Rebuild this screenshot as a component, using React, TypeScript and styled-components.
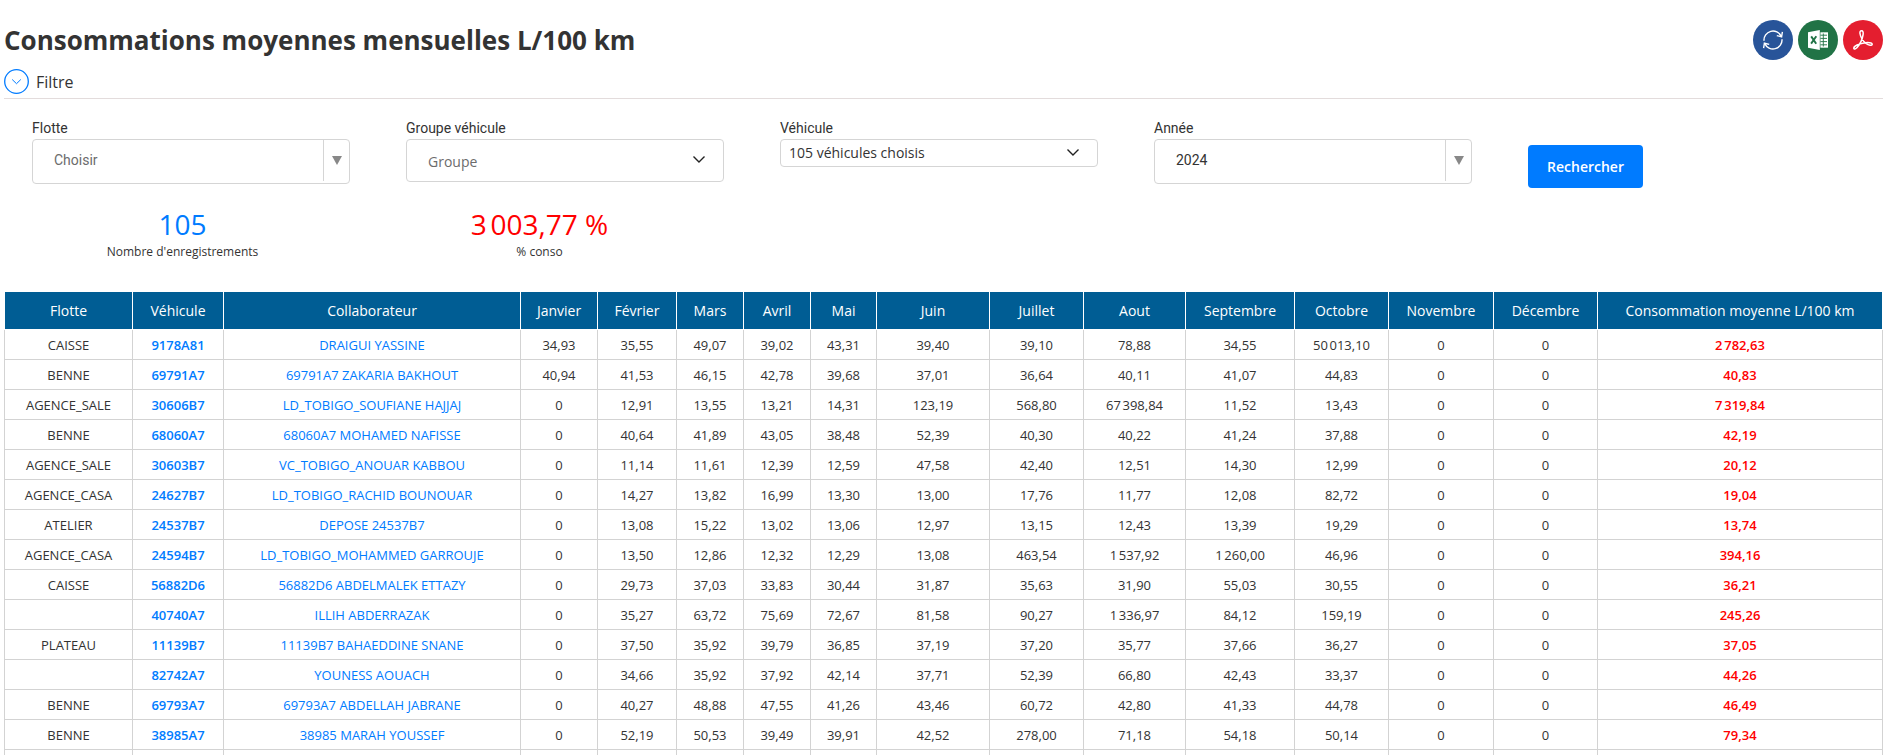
import React from "react";
import styled, { createGlobalStyle, css } from "styled-components";

const GlobalStyle = createGlobalStyle`
  *, *::before, *::after { box-sizing: border-box; }
  body {
    margin: 0;
    background: #fff;
    color: #333;
    font-family: "Open Sans", "Liberation Sans", sans-serif;
    font-size: 14px;
  }
`;

const Page = styled.main`
  height: 100vh;
  overflow: hidden auto;
  scrollbar-width: none;
  padding: 20px 6px 0 4px;
`;

const Header = styled.header`
  display: flex;
  align-items: center;
  justify-content: space-between;
  height: 40px;
`;

const Title = styled.h1`
  margin: 0;
  font-size: 26px;
  line-height: 40px;
  font-weight: 700;
`;

const Actions = styled.div`
  display: flex;
  gap: 5px;
`;

const ActionButton = styled.button<{ $color: string }>`
  display: flex;
  align-items: center;
  justify-content: center;
  width: 40px;
  height: 40px;
  padding: 0;
  border: 0;
  border-radius: 50%;
  background: ${(p) => p.$color};
  color: #fff;
  cursor: pointer;
`;

const FilterToggle = styled.button`
  display: flex;
  align-items: center;
  gap: 7px;
  width: 100%;
  height: 39px;
  padding: 5px 0 0;
  border: 0;
  border-bottom: 1px solid #e3dcdc;
  background: none;
  color: #333;
  font: 16px/24px "Open Sans", sans-serif;
  text-align: left;
  cursor: pointer;
`;

const Filters = styled.form`
  display: grid;
  grid-template-columns: repeat(5, 1fr);
  gap: 56px;
  align-items: start;
  height: 98px;
  padding: 19px 37px 0 28px;
`;

const Field = styled.div`
  display: flex;
  flex-direction: column;
`;

const Label = styled.label`
  color: #333;
  font: 14px/20px Roboto, sans-serif;
  height: 21px;
`;

const SelectBox = styled.div<{ $height: number }>`
  position: relative;
  display: flex;
  height: ${(p) => p.$height}px;
  border: 1px solid #d5d5d5;
  border-radius: 4px;
`;

const selectPadding = {
  split: "0 40px 4px 21px",
  plain: "2px 40px 0 21px",
  compact: "0 40px 0 8px",
};

const Select = styled.select<{ $kind: keyof typeof selectPadding; $muted?: boolean }>`
  appearance: none;
  flex: 1;
  min-width: 0;
  padding: ${(p) => selectPadding[p.$kind]};
  border: 0;
  background: transparent;
  color: ${(p) => (p.$muted ? "#6c6c6c" : "#333")};
  font: 14px/20px ${(p) => (p.$kind === "split" ? "Roboto" : '"Open Sans"')}, sans-serif;
`;

const ArrowCell = styled.span`
  position: absolute;
  top: 0;
  right: 0;
  bottom: 2px;
  display: flex;
  align-items: center;
  justify-content: center;
  width: 26px;
  border-left: 1px solid #d5d5d5;
  pointer-events: none;
`;

const ChevronCell = styled.span`
  position: absolute;
  top: 0;
  right: 17px;
  bottom: 2px;
  display: flex;
  align-items: center;
  pointer-events: none;
`;

const SearchButton = styled.button`
  justify-self: start;
  width: 115px;
  height: 43px;
  margin-top: 27px;
  padding: 0;
  border: 0;
  border-radius: 4px;
  background: #007bff;
  color: #fff;
  font: 600 14px/20px "Open Sans", sans-serif;
  cursor: pointer;
`;

const Stats = styled.section`
  display: grid;
  grid-template-columns: repeat(5, 19%);
  height: 94px;
  padding-top: 8px;
  text-align: center;
`;

const StatValue = styled.div<{ $color: string }>`
  color: ${(p) => p.$color};
  font-size: 28px;
  line-height: 38px;
  font-weight: 400;
`;

const StatLabel = styled.div`
  font-size: 12px;
  line-height: 18px;
`;

const Table = styled.table`
  width: 100%;
  table-layout: fixed;
  border-collapse: collapse;
  text-align: center;
  font-size: 13px;
  line-height: 18px;
`;

const HeadCell = styled.th`
  height: 38px;
  padding: 0;
  border: 1px solid #fff;
  background: #005d94;
  color: #fff;
  font-size: 14px;
  font-weight: 500;
`;

const Cell = styled.td<{ $alert?: boolean }>`
  height: 30px;
  padding: 0;
  border: 1px solid #d3d3d3;
  ${(p) => p.$alert && css`
    color: #f00;
    font-weight: 600;
  `}
`;

const CellLink = styled.a<{ $strong?: boolean }>`
  color: #007bff;
  font-weight: ${(p) => (p.$strong ? 600 : 400)};
  text-decoration: none;
`;

const columns: [string, number][] = [
  ["Flotte", 128], ["Véhicule", 91], ["Collaborateur", 297], ["Janvier", 77],
  ["Février", 79], ["Mars", 67], ["Avril", 67], ["Mai", 66], ["Juin", 113],
  ["Juillet", 94], ["Aout", 102], ["Septembre", 109], ["Octobre", 94],
  ["Novembre", 105], ["Décembre", 104], ["Consommation moyenne L/100 km", 285],
];

const rows = `CAISSE|9178A81|DRAIGUI YASSINE|34,93|35,55|49,07|39,02|43,31|39,40|39,10|78,88|34,55|50 013,10|0|0|2 782,63
BENNE|69791A7|69791A7 ZAKARIA BAKHOUT|40,94|41,53|46,15|42,78|39,68|37,01|36,64|40,11|41,07|44,83|0|0|40,83
AGENCE_SALE|30606B7|LD_TOBIGO_SOUFIANE HAJJAJ|0|12,91|13,55|13,21|14,31|123,19|568,80|67 398,84|11,52|13,43|0|0|7 319,84
BENNE|68060A7|68060A7 MOHAMED NAFISSE|0|40,64|41,89|43,05|38,48|52,39|40,30|40,22|41,24|37,88|0|0|42,19
AGENCE_SALE|30603B7|VC_TOBIGO_ANOUAR KABBOU|0|11,14|11,61|12,39|12,59|47,58|42,40|12,51|14,30|12,99|0|0|20,12
AGENCE_CASA|24627B7|LD_TOBIGO_RACHID BOUNOUAR|0|14,27|13,82|16,99|13,30|13,00|17,76|11,77|12,08|82,72|0|0|19,04
ATELIER|24537B7|DEPOSE 24537B7|0|13,08|15,22|13,02|13,06|12,97|13,15|12,43|13,39|19,29|0|0|13,74
AGENCE_CASA|24594B7|LD_TOBIGO_MOHAMMED GARROUJE|0|13,50|12,86|12,32|12,29|13,08|463,54|1 537,92|1 260,00|46,96|0|0|394,16
CAISSE|56882D6|56882D6 ABDELMALEK ETTAZY|0|29,73|37,03|33,83|30,44|31,87|35,63|31,90|55,03|30,55|0|0|36,21
|40740A7|ILLIH ABDERRAZAK|0|35,27|63,72|75,69|72,67|81,58|90,27|1 336,97|84,12|159,19|0|0|245,26
PLATEAU|11139B7|11139B7 BAHAEDDINE SNANE|0|37,50|35,92|39,79|36,85|37,19|37,20|35,77|37,66|36,27|0|0|37,05
|82742A7|YOUNESS AOUACH|0|34,66|35,92|37,92|42,14|37,71|52,39|66,80|42,43|33,37|0|0|44,26
BENNE|69793A7|69793A7 ABDELLAH JABRANE|0|40,27|48,88|47,55|41,26|43,46|60,72|42,80|41,33|44,78|0|0|46,49
BENNE|38985A7|38985 MARAH YOUSSEF|0|52,19|50,53|39,49|39,91|42,52|278,00|71,18|54,18|50,14|0|0|79,34
|||||||||||||||`
  .split("\n")
  .map((line) => line.split("|"));

// Thousands are grouped with a narrow no-break space, as in French typography.
const group = (value: string) => value.replace(" ", "\u202f");

const Chevron = () => (
  <svg width="14" height="9" viewBox="0 0 14 9" fill="none" stroke="#222" strokeWidth="1.4">
    <path d="M1.500 1.500 7 7l5.500-5.500" />
  </svg>
);

const Triangle = () => (
  <svg width="10" height="9" viewBox="0 0 10 9" fill="#888">
    <path d="M0 0h10L5 9z" />
  </svg>
);

const CircleChevron = () => (
  <svg width="25" height="25" viewBox="0 0 25 25" fill="none" stroke="#007bff">
    <circle cx="12.500" cy="12.500" r="11.800" strokeWidth="1.300" />
    <path d="m8.200 10.500 4.300 4.200 4.300-4.200" strokeWidth="1" />
  </svg>
);

const RefreshIcon = () => (
  <svg width="20" height="20" viewBox="0 0 20 20" fill="none" stroke="#fff" strokeWidth="1.400">
    <path d="M1 10.800A9 9 0 0 1 18.200 6.400M19 9.200A9 9 0 0 1 1.800 13.600" />
    <path d="M19.400 1.800 18.600 6.800 13.800 5.600M.600 18.200 1.400 13.200 6.200 14.400" />
  </svg>
);

const ExcelIcon = () => (
  <svg width="20" height="20" viewBox="0 0 20 20">
    <path fill="#fff" d="M0 2.2 11.8 0v20L0 17.8z" />
    <path fill="#fff" d="M12.4 2.3H20v15.4h-7.6z" />
    <path
      fill="none"
      stroke="#217346"
      strokeWidth=".9"
      d="M12.4 5.2h6.6M12.4 8.4h6.6M12.4 11.6h6.6M12.4 14.8h6.6M15.300 3.500v13"
    />
    <path fill="none" stroke="#217346" strokeWidth="1.9" d="m3.2 6.4 5 7.3M8.3 6.2l-5.2 7.4" />
  </svg>
);

const PdfIcon = () => (
  <svg width="20" height="20" viewBox="0 0 20 20" fill="none" stroke="#fff" strokeWidth="1.5" strokeLinejoin="round">
    <path d="M8.3.8c1.6-.3 2.2 1.400 1.700 4.200C9.300 9.200 6.800 14.500 4.100 17.600c-1.400 1.600-3.300 1.800-3.300.6 0-2.200 5.300-4.500 10.200-5.300 4.300-.7 8.200-.2 8.200 1.400 0 1.700-3.600 1.200-6.200-.9C9.900 11 7.400 6.400 7 3.500 6.800 1.900 7.200.9 8.300.8z" />
  </svg>
);

export default function App() {
  return (
    <>
      <GlobalStyle />
      <Page>
        <Header>
          <Title>Consommations moyennes mensuelles L/100 km</Title>
          <Actions>
            <ActionButton type="button" $color="#285499" aria-label="Actualiser">
              <RefreshIcon />
            </ActionButton>
            <ActionButton type="button" $color="#217346" aria-label="Exporter en Excel">
              <ExcelIcon />
            </ActionButton>
            <ActionButton type="button" $color="#e41e2f" aria-label="Exporter en PDF">
              <PdfIcon />
            </ActionButton>
          </Actions>
        </Header>

        <FilterToggle type="button" aria-expanded="true">
          <CircleChevron />
          Filtre
        </FilterToggle>

        <Filters onSubmit={(e) => e.preventDefault()}>
          <Field>
            <Label htmlFor="flotte">Flotte</Label>
            <SelectBox $height={45}>
              <Select id="flotte" $kind="split" $muted>
                <option>Choisir</option>
              </Select>
              <ArrowCell><Triangle /></ArrowCell>
            </SelectBox>
          </Field>
          <Field>
            <Label htmlFor="groupe">Groupe véhicule</Label>
            <SelectBox $height={43}>
              <Select id="groupe" $kind="plain" $muted>
                <option>Groupe</option>
              </Select>
              <ChevronCell><Chevron /></ChevronCell>
            </SelectBox>
          </Field>
          <Field>
            <Label htmlFor="vehicule">Véhicule</Label>
            <SelectBox $height={28}>
              <Select id="vehicule" $kind="compact">
                <option>105 véhicules choisis</option>
              </Select>
              <ChevronCell><Chevron /></ChevronCell>
            </SelectBox>
          </Field>
          <Field>
            <Label htmlFor="annee">Année</Label>
            <SelectBox $height={45}>
              <Select id="annee" $kind="split">
                <option>2024</option>
              </Select>
              <ArrowCell><Triangle /></ArrowCell>
            </SelectBox>
          </Field>
          <SearchButton type="submit">Rechercher</SearchButton>
        </Filters>

        <Stats>
          <div>
            <StatValue $color="#007bff">105</StatValue>
            <StatLabel>Nombre d'enregistrements</StatLabel>
          </div>
          <div>
            <StatValue $color="#f00">{group("3 003,77")} %</StatValue>
            <StatLabel>% conso</StatLabel>
          </div>
        </Stats>

        <Table>
          <colgroup>
            {columns.map(([name, width]) => (
              <col key={name} width={width} />
            ))}
          </colgroup>
          <thead>
            <tr>
              {columns.map(([name]) => (
                <HeadCell key={name} scope="col">{name}</HeadCell>
              ))}
            </tr>
          </thead>
          <tbody>
            {rows.map(([fleet, plate, driver, ...values], r) => (
              <tr key={r}>
                <Cell>{fleet}</Cell>
                <Cell>{plate && <CellLink href="#" $strong>{plate}</CellLink>}</Cell>
                <Cell>{driver && <CellLink href="#">{driver}</CellLink>}</Cell>
                {values.map((value, i) => (
                  <Cell key={i} $alert={i === values.length - 1}>{group(value)}</Cell>
                ))}
              </tr>
            ))}
          </tbody>
        </Table>
      </Page>
    </>
  );
}
